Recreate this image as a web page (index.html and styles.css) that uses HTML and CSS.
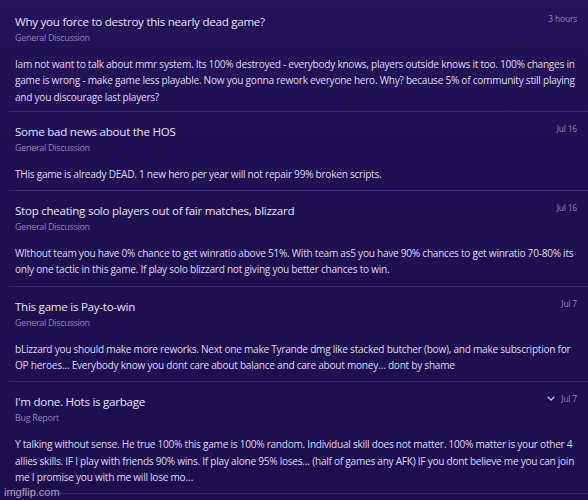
FILE: index.html
```html
<!DOCTYPE html>
<html lang="en">
<head>
<meta charset="utf-8">
<title>Topics</title>
<link rel="stylesheet" href="styles.css">
</head>
<body>
<div class="list">
  <div class="topic first">
    <div class="head">
      <div class="title">Why you force to destroy this nearly dead game?</div>
      <div class="meta"><span class="date">3 hours</span></div>
    </div>
    <div class="cat">General Discussion</div>
    <div class="excerpt">Iam not want to talk about mmr system. Its 100% destroyed - everybody knows, players outside knows it too. 100% changes in game is wrong - make game less playable. Now you gonna rework everyone hero. Why? because 5% of community still playing and you discourage last players?</div>
  </div>
  <div class="topic">
    <div class="head">
      <div class="title">Some bad news about the HOS</div>
      <div class="meta"><span class="date">Jul 16</span></div>
    </div>
    <div class="cat">General Discussion</div>
    <div class="excerpt">THis game is already DEAD. 1 new hero per year will not repair 99% broken scripts.</div>
  </div>
  <div class="topic">
    <div class="head">
      <div class="title">Stop cheating solo players out of fair matches, blizzard</div>
      <div class="meta"><span class="date">Jul 16</span></div>
    </div>
    <div class="cat">General Discussion</div>
    <div class="excerpt">WIthout team you have 0% chance to get winratio above 51%. With team as5 you have 90% chances to get winratio 70-80% its only one tactic in this game. If play solo blizzard not giving you better chances to win.</div>
  </div>
  <div class="topic">
    <div class="head">
      <div class="title">This game is Pay-to-win</div>
      <div class="meta"><span class="date">Jul 7</span></div>
    </div>
    <div class="cat">General Discussion</div>
    <div class="excerpt">bLizzard you should make more reworks. Next one make Tyrande dmg like stacked butcher (bow), and make subscription for OP heroes… Everybody know you dont care about balance and care about money… dont by shame</div>
  </div>
  <div class="topic">
    <div class="head">
      <div class="title">I'm done. Hots is garbage</div>
      <div class="meta">
        <svg class="chev" width="8" height="5" viewBox="0 0 8 5"><path d="M0.7 0.7 L4 4 L7.3 0.7" fill="none" stroke="#b9b3d2" stroke-width="1.3"/></svg>
        <span class="date">Jul 7</span>
      </div>
    </div>
    <div class="cat">Bug Report</div>
    <div class="excerpt">Y talking without sense. He true 100% this game is 100% random. Individual skill does not matter. 100% matter is your other 4 allies skills. IF I play with friends 90% wins. If play alone 95% loses… (half of games any AFK) IF you dont believe me you can join me I promise you with me will lose mo…</div>
  </div>
</div>
<div class="watermark">imgflip.com</div>
</body>
</html>
```

FILE: styles.css
```css
html, body {
  margin: 0;
  padding: 0;
}
body {
  width: 588px;
  height: 500px;
  overflow: hidden;
  background: linear-gradient(180deg, #23145b 0%, #1f1053 40%, #1d0f4f 100%);
  font-family: "Open Sans", "Noto Sans", sans-serif;
  position: relative;
}
.list {
  padding-left: 9px;
}
.topic {
  padding: 11px 2px 8px 6px;
  border-bottom: 1px solid #36296d;
}
.topic.first {
  padding-top: 13px;
  padding-bottom: 6px;
}
.head {
  display: flex;
  justify-content: space-between;
  align-items: flex-start;
}
.title {
  font-size: 11.6px;
  letter-spacing: -0.27px;
  line-height: 18px;
  color: #e4e0f0;
}
.meta {
  display: flex;
  align-items: center;
  gap: 6px;
  margin-right: 9px;
}
.date {
  font-size: 8.4px;
  letter-spacing: -0.15px;
  line-height: 11px;
  color: #8f89aa;
}
.chev {
  display: block;
}
.cat {
  font-size: 9px;
  letter-spacing: -0.3px;
  line-height: 14px;
  color: #8a82b0;
}
.excerpt {
  margin-top: 11px;
  font-size: 10.1px;
  letter-spacing: -0.26px;
  line-height: 16.3px;
  color: #dcd8ea;
}
.watermark {
  position: absolute;
  left: 4px;
  bottom: 2px;
  font-family: "Liberation Sans", Arial, sans-serif;
  font-size: 11px;
  color: rgba(225, 225, 225, 0.7);
}
```
